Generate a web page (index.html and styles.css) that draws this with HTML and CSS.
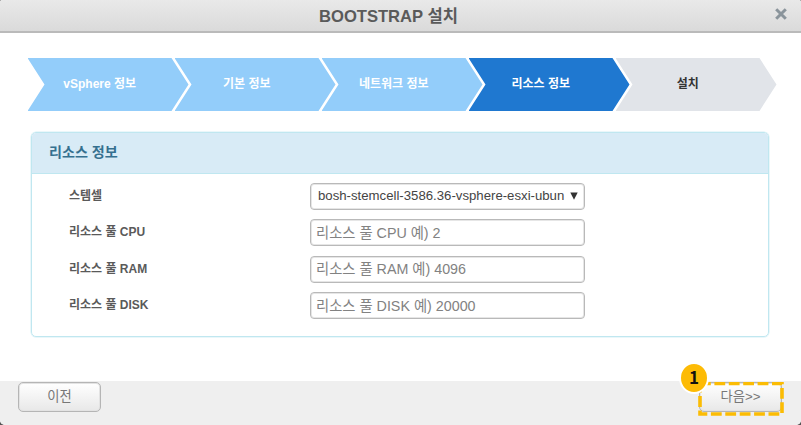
FILE: index.html
```html
<!DOCTYPE html>
<html lang="ko">
<head>
<meta charset="utf-8">
<title>BOOTSTRAP 설치</title>
<link rel="stylesheet" href="styles.css">
</head>
<body>
<div class="dialog">
  <header class="titlebar">
    <h1 class="title">BOOTSTRAP 설치</h1>
    <button class="close" aria-label="닫기"><svg width="14" height="14" viewBox="0 0 14 14"><path d="M2.2 2.2 11.8 11.8M11.8 2.2 2.2 11.8"/></svg></button>
  </header>
  <main class="content">
    <ol class="steps">
      <li class="step"><span>vSphere 정보</span></li>
      <li class="step"><span>기본 정보</span></li>
      <li class="step"><span>네트워크 정보</span></li>
      <li class="step active"><span>리소스 정보</span></li>
      <li class="step pending"><span>설치</span></li>
    </ol>
    <section class="panel">
      <h2 class="panel-title">리소스 정보</h2>
      <form class="fields">
        <div class="field"><label for="stemcell">스템셀</label>
          <div class="control select" id="stemcell"><span class="value">bosh-stemcell-3586.36-vsphere-esxi-ubun</span><svg class="arrow" width="8" height="8" viewBox="0 0 8 8"><path d="M.3.6h7.4L4 7.8z"/></svg></div></div>
        <div class="field"><label for="cpu">리소스 풀 CPU</label><input class="control" id="cpu" placeholder="리소스 풀 CPU 예) 2"></div>
        <div class="field"><label for="ram">리소스 풀 RAM</label><input class="control" id="ram" placeholder="리소스 풀 RAM 예) 4096"></div>
        <div class="field"><label for="disk">리소스 풀 DISK</label><input class="control" id="disk" placeholder="리소스 풀 DISK 예) 20000"></div>
      </form>
    </section>
  </main>
  <footer class="footer">
    <button class="btn">이전</button>
    <div class="next">
      <button class="btn">다음&gt;&gt;</button>
      <svg class="outline" width="86" height="34" viewBox="0 0 86 34"><path d="M2 1.5H84V32H2Z"/></svg>
      <span class="badge">1</span>
    </div>
  </footer>
</div>
</body>
</html>
```

FILE: styles.css
```css
* { box-sizing: border-box; }
body {
  margin: 0;
  background: #555;
  font-family: "Liberation Sans", "Noto Sans CJK KR", sans-serif;
}
.dialog {
  display: flex;
  flex-direction: column;
  width: 801px;
  height: 425px;
  background: #fff;
  border-radius: 2px 2px 5px 5px;
  overflow: hidden;
}
.titlebar {
  position: relative;
  display: flex;
  justify-content: center;
  align-items: center;
  height: 33px;
  padding-right: 24px;
  background: linear-gradient(#e9e9e9, #dadada);
  border-bottom: 2px solid #bababa;
}
.title { margin: 0; padding-top: 3px; font-size: 16.6px; line-height: 30px; color: #5a5a5a; }
.close {
  position: absolute;
  top: 7px;
  right: 13px;
  width: 14px;
  height: 14px;
  padding: 0;
  border: 0;
  background: none;
}
.close svg { display: block; }
.close path { fill: none; stroke: #8a949b; stroke-width: 3; }
.content { height: 348px; padding: 25px 31px 0 30px; }
.steps { display: flex; margin: 0 0 21px -2.5px; padding: 0; list-style: none; }
.step {
  flex: none;
  width: 161.5px;
  height: 53px;
  margin-right: -14.5px;
  padding-right: 17px;
  background: #93cdfa;
  color: #fff;
  font-size: 12px;
  font-weight: bold;
  line-height: 53px;
  text-align: center;
  clip-path: polygon(0 0, 144px 0, 161px 50%, 144px 100%, 0 100%, 17px 50%);
}
.step.active { background: #1f78d0; }
.step.pending { background: #e1e4e9; color: #333; }
.panel {
  height: 205px;
  width: 738px;
  border: 1px solid #c0e7f0;
  border-radius: 5px;
  box-shadow: 0 0 0 .5px #d5eff5;
  margin-left: 1px;
  overflow: hidden;
}
.panel-title {
  height: 41px;
  margin: 0;
  padding-left: 17px;
  background: #d8ebf6;
  border-bottom: 1px solid #bfe7f0;
  color: #35708f;
  font-size: 14.1px;
  line-height: 39px;
}
.fields { display: grid; gap: 9.5px; padding: 8.5px 0 0 37px; }
.field { display: grid; grid-template-columns: 241px 275px; height: 27px; }
.field label { color: #5a5a5a; font-size: 12px; font-weight: bold; line-height: 27px; }
.control {
  width: 275px;
  height: 27px;
  padding: 0 5px;
  border: 1px solid #b9b9b9;
  border-radius: 4px;
  box-shadow: inset 0 0 0 1px #e6e6e6;
  background: #fff;
  color: #444;
  font: 14.3px "Liberation Sans", "Noto Sans CJK KR", sans-serif;
}
.control::placeholder { color: #828282; opacity: 1; }
.select { display: flex; align-items: center; padding: 0 5px 1px 7px; font-size: 13.2px; }
.value { width: 248px; overflow: hidden; white-space: nowrap; }
.arrow { flex: none; margin-left: 4px; fill: #333; }
.footer {
  display: flex;
  justify-content: space-between;
  height: 44px;
  padding: 1px 19px 0 18px;
  background: #efefef;
}
.btn {
  display: block;
  width: 83px;
  height: 30px;
  padding: 0 0 3px;
  border: 1px solid #b5b5b5;
  border-radius: 5px;
  box-shadow: inset 0 0 0 1px #e3e3e3;
  background: linear-gradient(#fff, #e8e8e8);
  color: #777;
  font: 13.3px "Liberation Sans", "Noto Sans CJK KR", sans-serif;
}
.next { position: relative; }
.outline { position: absolute; left: -1px; top: 0; fill: none; stroke: #fbbc04; stroke-width: 3.6; stroke-dasharray: 10.8 3.6; }
.badge {
  position: absolute;
  left: -20px;
  top: -20px;
  width: 30px;
  height: 32px;
  border: 2px solid #fff;
  border-radius: 50%;
  background: #fdbb05;
  color: #111;
  font: bold 17px/26px "Noto Sans CJK KR", sans-serif;
  text-align: center;
}
```
